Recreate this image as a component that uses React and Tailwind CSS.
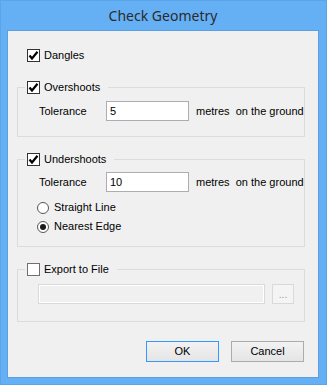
import { useState } from 'react'

function CheckBox({ checked, onChange, label }) {
  return (
    <label className="flex h-[13px] items-center gap-[4px]">
      <span
        onClick={() => onChange(!checked)}
        className={`flex h-[13px] w-[13px] shrink-0 items-center justify-center border bg-white ${
          checked ? 'border-[#333333]' : 'border-[#707070]'
        }`}
      >
        {checked && (
          <svg width="11" height="11" viewBox="0 0 11 11" aria-hidden="true">
            <path
              d="M1.5 5.5 L4 8.5 L9.5 1.8"
              fill="none"
              stroke="#000"
              strokeWidth="2.2"
              strokeLinejoin="miter"
            />
          </svg>
        )}
      </span>
      <span className="leading-[13px]">{label}</span>
    </label>
  )
}

function Radio({ checked, onSelect, label }) {
  return (
    <label className="flex h-[13px] items-center gap-[5px]" onClick={onSelect}>
      <span className="flex h-[12px] w-[12px] shrink-0 items-center justify-center rounded-full border border-[#555555] bg-white">
        {checked && <span className="h-[6px] w-[6px] rounded-full bg-[#1a1a1a]" />}
      </span>
      <span className="leading-[13px]">{label}</span>
    </label>
  )
}

function ToleranceRow({ value }) {
  return (
    <div className="flex h-[20px] items-center pl-[21px]">
      <span className="w-[67px]">Tolerance</span>
      <input
        defaultValue={value}
        className="h-[20px] w-[83px] border border-[#abadb3] bg-white px-[3px] text-[11px] outline-none"
      />
      <span className="ml-[7px] whitespace-pre">metres  on the ground</span>
    </div>
  )
}

function Group({ legend, children, className }) {
  return (
    <fieldset className={`w-[288px] border border-[#dcdcdc] p-0 ${className}`}>
      <legend className="ml-[7px] pl-[2px] pr-[8px]">{legend}</legend>
      {children}
    </fieldset>
  )
}

function Button({ children, primary }) {
  return (
    <button
      className={`h-[21px] w-[73px] border bg-gradient-to-b from-[#f2f2f2] to-[#e5e5e5] text-[11px] ${
        primary ? 'border-[#3399ff]' : 'border-[#acacac]'
      }`}
    >
      {children}
    </button>
  )
}

export default function App() {
  const [dangles, setDangles] = useState(true)
  const [overshoots, setOvershoots] = useState(true)
  const [undershoots, setUndershoots] = useState(true)
  const [exportFile, setExportFile] = useState(false)
  const [mode, setMode] = useState('nearest')

  return (
    <div
      className="flex h-[385px] w-[327px] flex-col border border-[#5ba4ea] bg-[#65b0f5] pb-[6px] pl-[6px] pr-[7px] text-[11px] text-black"
      style={{ fontFamily: '"Liberation Sans", Arial, sans-serif' }}
    >
      <div
        className="flex h-[29px] shrink-0 items-center justify-center text-[14px] text-[#2b2b2b]"
        style={{ fontFamily: '"Noto Sans", "Open Sans", sans-serif' }}
      >
        Check Geometry
      </div>
      <div className="flex flex-1 flex-col border border-[#5a9fe0] bg-[#f0f0f0] pl-[9px] pt-[18px]">
        <div className="pl-[10px]">
          <CheckBox checked={dangles} onChange={setDangles} label="Dangles" />
        </div>

        <Group
          className="mt-[19px]"
          legend={<CheckBox checked={overshoots} onChange={setOvershoots} label="Overshoots" />}
        >
          <div className="pb-[15px] pt-[7px]">
            <ToleranceRow value="5" />
          </div>
        </Group>

        <Group
          className="mt-[16px]"
          legend={<CheckBox checked={undershoots} onChange={setUndershoots} label="Undershoots" />}
        >
          <div className="flex flex-col pb-[13px] pt-[6px]">
            <ToleranceRow value="10" />
            <div className="mt-[9px] flex flex-col gap-[6px] pl-[19px]">
              <Radio
                checked={mode === 'straight'}
                onSelect={() => setMode('straight')}
                label="Straight Line"
              />
              <Radio
                checked={mode === 'nearest'}
                onSelect={() => setMode('nearest')}
                label="Nearest Edge"
              />
            </div>
          </div>
        </Group>

        <Group
          className="mt-[16px]"
          legend={<CheckBox checked={exportFile} onChange={setExportFile} label="Export to File" />}
        >
          <div className="flex h-[20px] items-center gap-[7px] pl-[20px] pb-0 mt-[8px] mb-[17px]">
            <div className="h-[20px] w-[227px] border border-[#d9d9d9] bg-[#f0f0f0] shadow-[inset_0_0_0_1px_#ffffff]" />
            <div className="flex h-[20px] w-[22px] items-end justify-center border border-[#d9d9d9] bg-[#f4f4f4] pb-[3px] text-[10px] leading-[10px] text-[#9a9a9a]">
              ...
            </div>
          </div>
        </Group>

        <div className="mt-[19px] flex gap-[12px] pl-[129px]">
          <Button primary>OK</Button>
          <Button>Cancel</Button>
        </div>
      </div>
    </div>
  )
}
